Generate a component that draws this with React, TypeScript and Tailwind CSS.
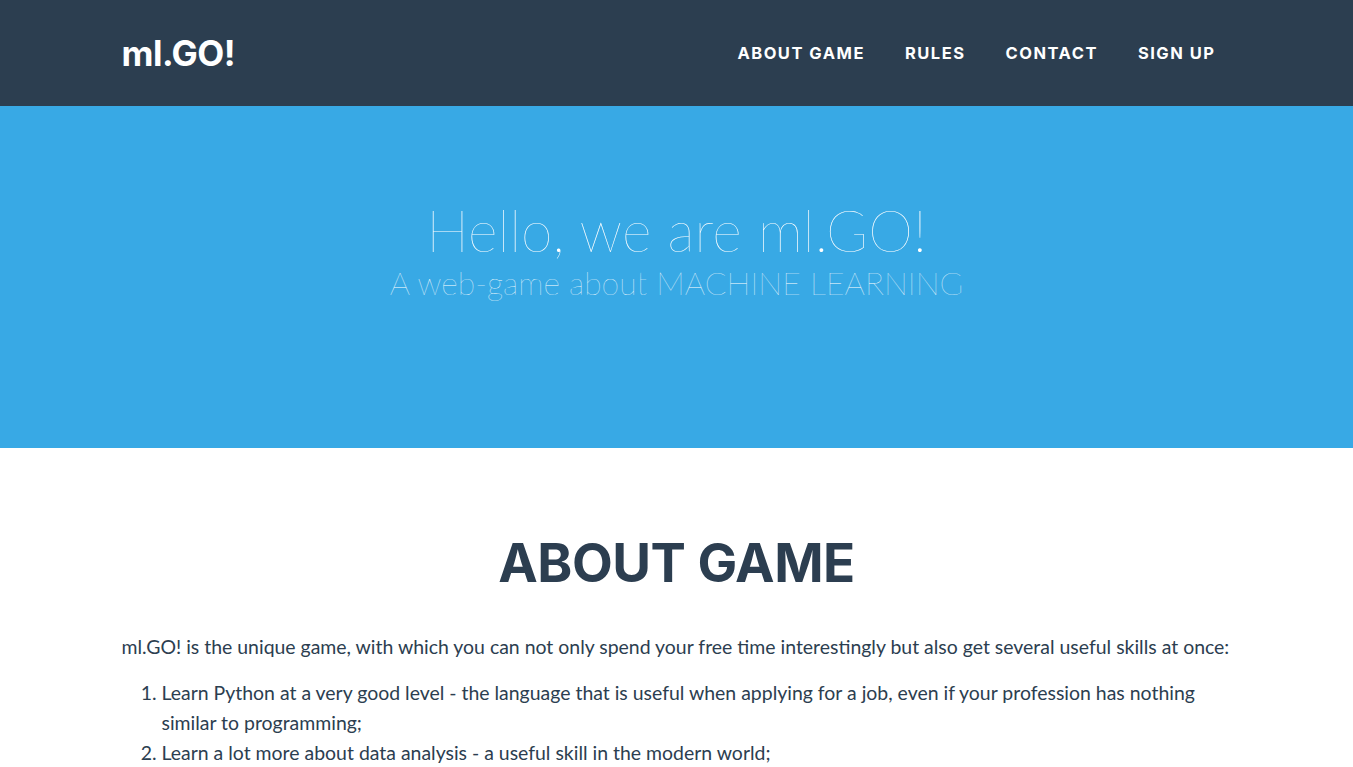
export default function App() {
  const head = { fontFamily: "Inter, 'DejaVu Sans', sans-serif" };
  return (
    <div className="min-h-screen bg-white text-[#2c3e50]" style={{ fontFamily: "Lato, 'Noto Sans', sans-serif" }}>
      {/* Navbar */}
      <nav className="bg-[#2c3e50] h-[106px]">
        <div className="max-w-[1140px] mx-auto px-[15px] h-full flex items-center justify-between">
          <a className="text-white text-[35px] font-bold tracking-[-0.5px] leading-none" style={head}>ml.GO!</a>
          <ul className="flex items-center gap-[40px] pr-[16px] text-white text-[16.5px] font-bold tracking-[1.5px] uppercase" style={head}>
            <li>About Game</li>
            <li>Rules</li>
            <li>Contact</li>
            <li>Sign Up</li>
          </ul>
        </div>
      </nav>

      {/* Hero */}
      <header className="bg-[#38a9e5] h-[342px] flex flex-col items-center pt-[96px] text-white">
        <h1 className="text-[57px] font-thin leading-none">Hello, we are ml.GO!</h1>
        <p className="text-[32px] font-thin leading-none mt-[8px]">A web-game about MACHINE LEARNING</p>
      </header>

      {/* About */}
      <section className="max-w-[1140px] mx-auto px-[15px] pt-[89px]">
        <h2 className="text-center text-[53px] font-bold uppercase leading-none tracking-[-0.5px]" style={head}>About Game</h2>
        <p className="mt-[42px] text-[19.45px] leading-[30px]">
          ml.GO! is the unique game, with which you can not only spend your free time interestingly but also get several useful skills at once:
        </p>
        <ol className="list-decimal pl-[40px] mt-[16px] text-[19.45px] leading-[30px]">
          <li>Learn Python at a very good level - the language that is useful when applying for a job, even if your profession has nothing similar to programming;</li>
          <li>Learn a lot more about data analysis - a useful skill in the modern world;</li>
        </ol>
      </section>
    </div>
  );
}
